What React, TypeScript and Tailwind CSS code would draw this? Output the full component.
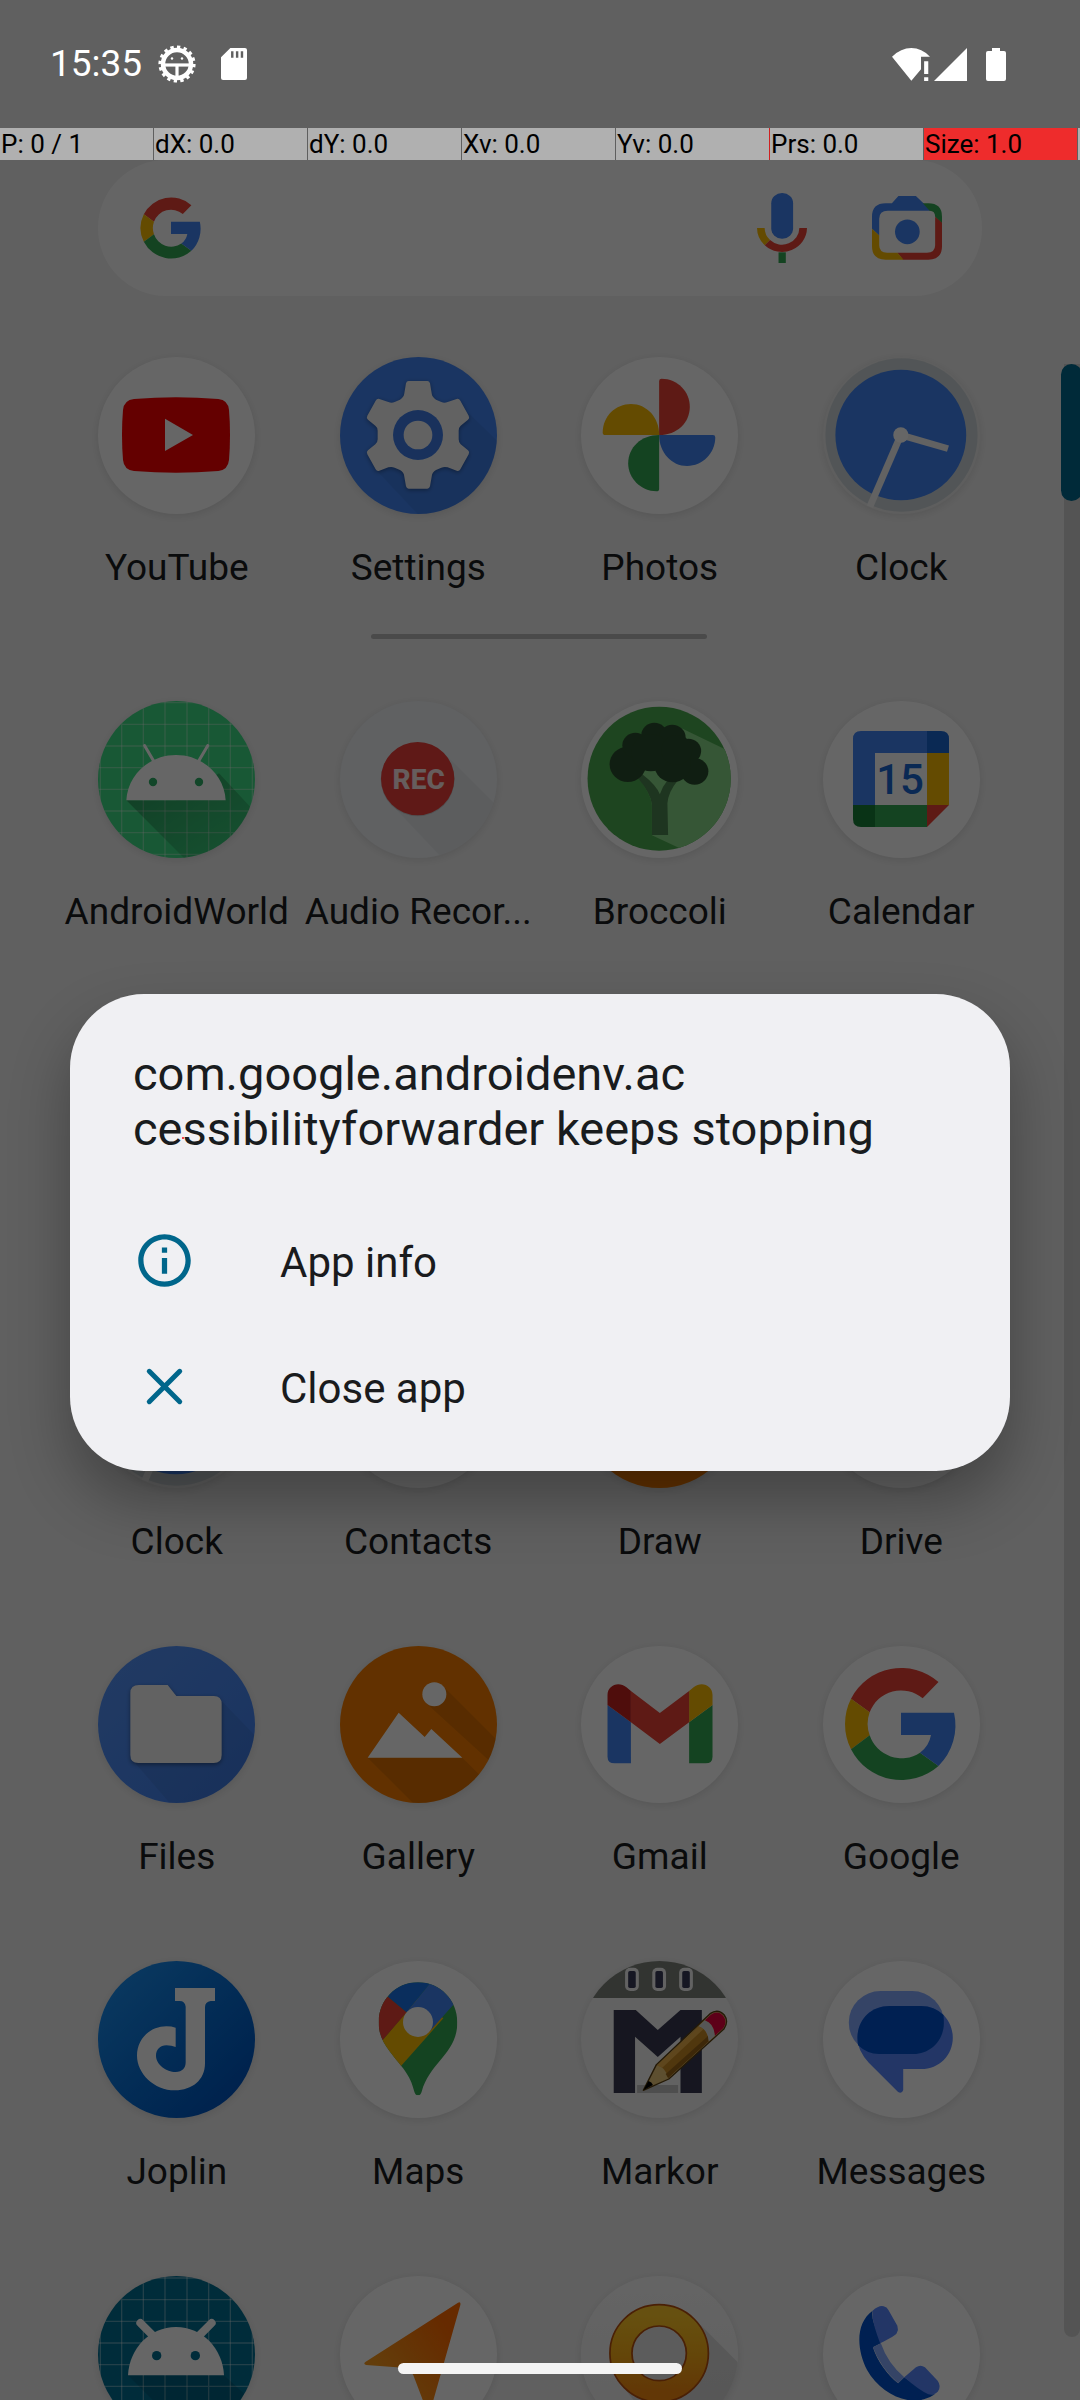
import type { ReactNode } from "react";

type IconProps = { viewBox: string; children: ReactNode };

function Art({ viewBox, children }: IconProps) {
  return (
    <svg viewBox={viewBox} preserveAspectRatio="none" className="block size-full" aria-hidden="true">
      {children}
    </svg>
  );
}

function GoogleG() {
  return (
    <>
      <path fill="#ea4335" d="M-50-25.3A56.5 56.5 0 0 1 37.5-42L21.7-25.7A33.5 33.5 0 0 0-31.3-11.7Z" />
      <path fill="#fbbc04" d="M-50-25.3L-31.3-11.7A33.5 33.5 0 0 0-31.3 11.3L-50 25.3A56.5 56.5 0 0 1-50-25.3Z" />
      <path fill="#34a853" d="M-50 25.3A56.5 56.5 0 0 0 37.5 42L19 28.7A33.5 33.5 0 0 1-31.3 11.3Z" />
      <path fill="#4285f4" d="M0-11.3H53A57 57 0 0 1 37.5 42L19 28.7A28 28 0 0 0 30 11H0Z" />
    </>
  );
}

function YouTubeIcon() {
  return (
    <Art viewBox="117 81 471 471">
      <path
        fill="#fa0000"
        d="M225 207Q351 196 478 207Q507 210 510 240Q516 315 510 390Q507 420 478 423Q351 434 225 423Q195 420 192 390Q186 315 192 240Q195 210 225 207Z"
      />
      <path fill="#fff" d="M318 266L402 315L318 363Z" />
    </Art>
  );
}

function SettingsIcon() {
  return (
    <Art viewBox="840 81 471 471">
      <path fill="#000" opacity="0.05" d="M1226 250L1330 350V560H1080L951 423L1074 315Z" />
      <g style={{ filter: "drop-shadow(0 4px 6px rgba(0,0,0,.35))" }}>
        <path
          fill="#f6f6f6"
          d="M1046 153H1102Q1108 153 1110 160L1115 190Q1116 202 1128 209L1144 216Q1153 220 1163 216L1190 207Q1197 205 1201 212L1226 257Q1230 264 1224 269L1202 287Q1196 292 1196 302V328Q1196 338 1202 343L1224 361Q1230 366 1226 373L1201 418Q1197 425 1190 422L1163 412Q1153 409 1144 413L1128 420Q1116 427 1115 440L1110 469Q1108 476 1102 476H1046Q1040 476 1038 469L1033 440Q1032 427 1020 420L1004 413Q995 409 985 412L958 422Q951 425 947 418L922 373Q918 366 924 361L946 343Q953 338 953 328V302Q953 292 946 287L924 269Q918 264 922 257L947 212Q951 205 958 207L985 216Q995 220 1004 216L1020 209Q1032 202 1033 190L1038 160Q1040 153 1046 153Z"
        />
      </g>
      <circle cx="1074" cy="315" r="75" fill="#3f7ce6" />
      <circle cx="1074" cy="315" r="43" fill="#f6f6f6" />
    </Art>
  );
}

function PhotosIcon() {
  return (
    <Art viewBox="119 81 456 471">
      <path fill="#ea4335" d="M346 315V153Q346 146 353 146C400 146 435 185 435 230C435 278 398 315 346 315Z" />
      <path fill="#fbbc04" d="M346 315H190Q182 315 182 308C182 258 220 222 264 222C310 222 346 262 346 315Z" />
      <path fill="#4285f4" d="M346 315H502Q509 315 509 322C509 370 472 408 427 408C382 408 346 368 346 315Z" />
      <path fill="#34a853" d="M346 315V476Q346 484 338 484C293 484 256 445 256 400C256 352 294 315 346 315Z" />
    </Art>
  );
}

function ClockIcon() {
  return (
    <Art viewBox="822 81 456 471">
      <ellipse cx="1050" cy="315" rx="221" ry="230" fill="#cdd5d9" />
      <ellipse cx="1048" cy="315" rx="190" ry="196" fill="#4285f4" />
      <path d="M1048 315L958 530" stroke="#f4f4f4" strokeWidth="20" />
      <path d="M1048 315L1185 356" stroke="#f4f4f4" strokeWidth="20" />
      <ellipse cx="1048" cy="315" rx="22" ry="23" fill="#fff" />
    </Art>
  );
}

const gridXs = [124, 188, 253, 318, 384, 449, 514, 580];

function AndroidWorldIcon() {
  return (
    <Art viewBox="117 93 471 471">
      <defs>
        <linearGradient id="aw-shadow" x1="0" y1="0" x2="1" y2="1">
          <stop offset="0" stopOpacity="0.3" />
          <stop offset="1" stopOpacity="0.05" />
        </linearGradient>
      </defs>
      {gridXs.map((x, i) => (
        <path key={x} d={`M${x} 93V564M117 ${98 + i * 65}H588`} stroke="#fff" strokeOpacity="0.32" strokeWidth="4" />
      ))}
      <path fill="url(#aw-shadow)" d="M202 391L380 569H620V460L480 310L351 391Z" />
      <path fill="#fff" d="M202 391C206 314 272 255 351 255C430 255 496 314 500 391Z" />
      <path d="M257 227L288 280M446 227L415 280" stroke="#fff" strokeWidth="9" strokeLinecap="round" />
      <circle cx="282" cy="336" r="12.5" fill="#2fae67" />
      <circle cx="420" cy="336" r="12.5" fill="#2fae67" />
    </Art>
  );
}

function RecorderIcon() {
  return (
    <Art viewBox="840 93 471 471">
      <path fill="#000" opacity="0.035" d="M1151 248L1330 427V600H1180L995 404Z" />
      <circle cx="1073" cy="328" r="111" fill="#000" opacity="0.12" />
      <circle cx="1073" cy="326" r="110" fill="#ee403a" />
      <text
        x="1076"
        y="357"
        textAnchor="middle"
        fontFamily="Roboto, sans-serif"
        fontWeight="800"
        fontSize="84"
        fill="#ffe8e8"
      >
        REC
      </text>
    </Art>
  );
}

function BroccoliIcon() {
  return (
    <Art viewBox="122 93 456 471">
      <defs>
        <clipPath id="broccoli-clip">
          <ellipse cx="349" cy="326" rx="208" ry="216" />
        </clipPath>
      </defs>
      <g clipPath="url(#broccoli-clip)">
        <path fill="#4dac50" d="M122 93H578V564H122Z" />
        <path fill="#87d787" d="M414 175L545 240H580V564H470L328 496L300 310Z" />
        <path
          fill="#4d8550"
          d="M328 495V405Q325 370 285 325L300 313Q340 345 351 373Q358 350 372 333H402Q376 365 373 400L375 495Z"
        />
        <path fill="#4dac50" d="M200 300L288 325Q325 370 328 405V496H200Z" />
        <g fill="#2a4d2d">
          <circle cx="258" cy="283" r="53" />
          <circle cx="280" cy="226" r="38" />
          <circle cx="335" cy="196" r="38" />
          <circle cx="387" cy="203" r="39" />
          <circle cx="434" cy="243" r="37" />
          <circle cx="452" cy="304" r="40" />
          <circle cx="388" cy="284" r="53" />
          <circle cx="325" cy="248" r="56" />
          <circle cx="400" cy="240" r="45" />
        </g>
      </g>
    </Art>
  );
}

function CalendarIcon() {
  return (
    <Art viewBox="0 0 157 157">
      <path fill="#4285f4" d="M30 104V38Q30 30 38 30H104V52H52V104Z" />
      <path fill="#1967d2" d="M104 30H118Q126 30 126 38V52H104Z" />
      <path fill="#fbbc04" d="M104 52H126V104H104Z" />
      <path fill="#188038" d="M30 104H52V126H38Q30 126 30 118Z" />
      <path fill="#34a853" d="M52 104H104V126H52Z" />
      <path fill="#ea4335" d="M104 104H126L104 126Z" />
      <text
        x="77"
        y="93"
        textAnchor="middle"
        fontFamily="Roboto, sans-serif"
        fontWeight="500"
        fontSize="42"
        fill="#1967d2"
      >
        15
      </text>
    </Art>
  );
}

function FilesIcon() {
  return (
    <Art viewBox="117 78 471 471">
      <path fill="#000" opacity="0.06" d="M485 240L620 380V570H350L225 425Z" />
      <path
        fill="#f6f6f6"
        style={{ filter: "drop-shadow(0 5px 6px rgba(0,0,0,.4))" }}
        d="M240 195H326L352 228H464Q488 228 488 252V405Q488 429 464 429H238Q214 429 214 405V219Q214 195 240 195Z"
      />
    </Art>
  );
}

function GalleryIcon() {
  return (
    <Art viewBox="840 78 471 471">
      <g fill="#000" opacity="0.1">
        <path d="M1149 198L1340 389V470L1098 249Z" />
        <path d="M923 413H1207L1340 546V570H1080Z" />
      </g>
      <circle cx="1123" cy="223" r="36" fill="#fff" />
      <path fill="#fff" d="M923 413L1016 278L1094 351L1114 327L1207 413Z" />
    </Art>
  );
}

function GmailIcon() {
  return (
    <Art viewBox="122 78 456 471">
      <path fill="#4285f4" d="M199 255L267 307V430H220Q199 430 199 410Z" />
      <path fill="#34a853" d="M504 255L436 307V430H484Q504 430 504 410Z" />
      <path fill="#c5221f" d="M199 255V225C199 195 232 182 254 202L267 213V307Z" />
      <path fill="#fbbc04" d="M504 255V225C504 195 471 182 449 202L436 213V307Z" />
      <path fill="#ea4335" d="M267 213L351 279L436 213V307L351 372L267 307Z" />
    </Art>
  );
}

function JoplinIcon() {
  return (
    <Art viewBox="117 93 471 471">
      <path
        fill="#fff"
        d="M348 174H468V213H455Q438 215 438 232V400C438 450 400 481 348 481C285 481 234 430 234 377C234 325 275 289 322 289Q338 289 350 293V351Q338 346 322 346C303 346 291 360 291 377C291 403 322 426 350 426C370 426 380 414 380 397V230Q378 213 362 213H348Z"
      />
    </Art>
  );
}

function MapsIcon() {
  return (
    <Art viewBox="840 93 471 471">
      <defs>
        <clipPath id="pin-clip">
          <path d="M1074 157C1140 157 1192 210 1192 277C1192 370 1110 395 1085 485Q1082 496 1074 496Q1066 496 1063 485C1050 430 1025 412 990 365C968 336 956 312 956 277C956 210 1008 157 1074 157Z" />
        </clipPath>
      </defs>
      <g clipPath="url(#pin-clip)">
        <path fill="#34a853" d="M940 140H1210V500H940Z" />
        <path fill="#fbbc04" d="M968 330L1074 205L1150 265L1023 408L900 400Z" />
        <path fill="#ea4335" d="M985 201L1040 247L968 330L900 340V201Z" />
        <path fill="#1a73e8" d="M985 201L1040 247L1108 163V140H985Z" />
        <path fill="#4285f4" d="M1040 247L1108 163V140H1200V201L1180 224L1110 303L1074 277Z" />
      </g>
      <circle cx="1074" cy="276" r="45" fill="#fff" />
    </Art>
  );
}

function MarkorIcon() {
  return (
    <Art viewBox="122 93 456 471">
      <path fill="#7d827b" d="M122 93H578V204H122Z" />
      {[250, 329, 407].map((x) => (
        <g key={x}>
          <rect x={x} y="113" width="40" height="70" rx="15" fill="#f4f4f4" />
          <rect x={x + 9} y="123" width="22" height="51" rx="5" fill="#383a58" />
        </g>
      ))}
      <path fill="#373950" d="M217 240H281L345 300L411 240H473V489H411V320L345 381L279 320V489H217Z" />
      <path fill="#c2c2c2" d="M285 465H404V489H285Z" />
      <path
        fill="#e8c578"
        stroke="#5a3f10"
        strokeWidth="4"
        strokeLinejoin="round"
        d="M303 481L341 404L497 251Q520 235 538 255Q552 275 537 297L377 447Z"
      />
      <path fill="#c98a24" d="M343 406L464 289Q492 300 493 334L375 444Q368 412 343 406Z" />
      <path fill="#eab04a" d="M343 406L464 289L478 297L358 413Z" />
      <path fill="#9a6518" d="M368 432L492 317L493 334L375 444Z" />
      <path fill="#d8d8d8" d="M464 289L482 271Q508 280 511 317L493 334Q492 300 464 289Z" />
      <path fill="#e8003c" d="M482 271L499 254Q520 240 535 257Q548 275 535 295L511 317Q508 280 482 271Z" />
      <path fill="#000" d="M303 481L318 453Q328 456 331 465Z" />
    </Art>
  );
}

function MessagesIcon() {
  return (
    <Art viewBox="822 93 456 471">
      <rect x="897" y="183" width="276" height="189" rx="92" ry="94" fill="#85aaff" />
      <path
        fill="#5888ff"
        d="M1015 228H1107C1160 228 1199 270 1199 323C1199 375 1160 417 1107 417H1055V480Q1051 493 1040 486L955 398Q922 362 922 325C922 270 960 228 1015 228Z"
      />
      <path
        fill="#0052cc"
        d="M1015 228H1107Q1145 228 1172 255Q1173 265 1173 280C1173 330 1135 372 1085 372H985Q950 372 924 346Q922 335 922 323C922 270 960 228 1015 228Z"
      />
    </Art>
  );
}

function AndroidTealIcon() {
  return (
    <Art viewBox="117 1038 471 471">
      {gridXs.map((x, i) => (
        <path key={x} d={`M${x} 1038V1509M117 ${1044 + i * 65}H588`} stroke="#fff" strokeOpacity="0.35" strokeWidth="4" />
      ))}
      <path fill="#000" opacity="0.12" d="M207 1336L380 1509H620V1450L495 1336Z" />
      <path fill="#fff" d="M207 1336C211 1255 272 1191 351 1191C430 1191 491 1255 495 1336Z" />
      <path d="M244 1179L287 1222M458 1179L415 1222" stroke="#fff" strokeWidth="24" strokeLinecap="round" />
      <circle cx="293" cy="1277" r="14" fill="#006e91" />
      <circle cx="409" cy="1277" r="14" fill="#006e91" />
    </Art>
  );
}

function NavigationIcon() {
  return (
    <Art viewBox="840 1038 471 471">
      <defs>
        <linearGradient id="arrow-fill" x1="1" y1="0.1" x2="0.2" y2="0.7">
          <stop offset="0.2" stopColor="#ff6a00" />
          <stop offset="1" stopColor="#f89a1c" />
        </linearGradient>
      </defs>
      <path
        fill="url(#arrow-fill)"
        d="M1194 1118Q1203 1113 1201 1125L1116 1425Q1104 1450 1094 1425L1060 1336Q1053 1316 1030 1313L918 1305Q909 1301 916 1296Z"
      />
    </Art>
  );
}

function RingIcon() {
  return (
    <Art viewBox="122 1038 456 471">
      <defs>
        <linearGradient id="ring-fill" x1="0" y1="0" x2="0" y2="1">
          <stop offset="0" stopColor="#ffc828" />
          <stop offset="0.5" stopColor="#fbb018" />
          <stop offset="1" stopColor="#f58a10" />
        </linearGradient>
      </defs>
      <path fill="#000" opacity="0.1" d="M450 1165L600 1320V1520H360L245 1372Z" />
      <ellipse cx="349" cy="1270" rx="79" ry="83" fill="#e6e6e6" />
      <ellipse cx="349" cy="1270" rx="111" ry="114" fill="none" stroke="#b8500e" strokeWidth="69" />
      <ellipse cx="349" cy="1270" rx="111" ry="114" fill="none" stroke="url(#ring-fill)" strokeWidth="59" />
    </Art>
  );
}

function PhoneIcon() {
  return (
    <Art viewBox="822 1038 456 471">
      <path
        fill="#0052cc"
        d="M966 1142C915 1180 920 1260 950 1320C985 1385 1060 1425 1115 1408Q1135 1402 1148 1392Q1130 1395 1115 1382L1058 1342L1040 1360C1010 1335 980 1295 967 1252L990 1240L970 1180Q963 1160 966 1142Z"
      />
      <path
        fill="#5888ff"
        d="M966 1142Q985 1125 998 1129Q1008 1131 1012 1140L1038 1187Q1042 1198 1036 1210Q1033 1217 988 1240Q968 1185 966 1160Z"
      />
      <path
        fill="#5888ff"
        d="M1058 1342L1092 1312Q1105 1303 1118 1312L1155 1352Q1166 1368 1156 1384Q1145 1398 1128 1393Q1100 1380 1058 1342Z"
      />
      <path fill="#85aaff" d="M967 1252L990 1240Q1010 1300 1058 1342L1040 1360Q990 1315 967 1252Z" />
    </Art>
  );
}

type App = { name: string; tile: string; icon?: ReactNode; label?: boolean };

const favourites: App[] = [
  { name: "YouTube", tile: "bg-white", icon: <YouTubeIcon /> },
  { name: "Settings", tile: "bg-[#4285f4]", icon: <SettingsIcon /> },
  { name: "Photos", tile: "bg-white", icon: <PhotosIcon /> },
  { name: "Clock", tile: "bg-[#ebebeb]", icon: <ClockIcon /> },
];

const upperApps: App[] = [
  { name: "AndroidWorld", tile: "bg-[#3ddc84]", icon: <AndroidWorldIcon /> },
  { name: "Audio Recor...", tile: "bg-[#eff2f5]", icon: <RecorderIcon /> },
  { name: "Broccoli", tile: "bg-white", icon: <BroccoliIcon /> },
  { name: "Calendar", tile: "bg-white", icon: <CalendarIcon /> },
];

const lowerApps: App[] = [
  { name: "Clock", tile: "bg-[#ebebeb]", icon: <ClockIcon /> },
  { name: "Contacts", tile: "bg-white" },
  { name: "Draw", tile: "bg-[#f57c00]" },
  { name: "Drive", tile: "bg-white" },
  { name: "Files", tile: "bg-linear-to-br from-[#5694f8] to-[#4080f0]", icon: <FilesIcon /> },
  { name: "Gallery", tile: "bg-[#f57c00]", icon: <GalleryIcon /> },
  { name: "Gmail", tile: "bg-white", icon: <GmailIcon /> },
  {
    name: "Google",
    tile: "bg-white",
    icon: (
      <Art viewBox="-78 -78 157 157">
        <GoogleG />
      </Art>
    ),
  },
  { name: "Joplin", tile: "bg-linear-to-br from-[#1e95f5] to-[#004ab8]", icon: <JoplinIcon /> },
  { name: "Maps", tile: "bg-white", icon: <MapsIcon /> },
  { name: "Markor", tile: "bg-[#f4f4f4]", icon: <MarkorIcon /> },
  { name: "Messages", tile: "bg-white", icon: <MessagesIcon /> },
  { name: "Android", tile: "bg-[#006e91]", icon: <AndroidTealIcon />, label: false },
  { name: "Navigation", tile: "bg-white", icon: <NavigationIcon />, label: false },
  { name: "Ring", tile: "bg-linear-to-b from-[#fafafa] to-[#f0f0f0]", icon: <RingIcon />, label: false },
  { name: "Phone", tile: "bg-white", icon: <PhoneIcon />, label: false },
];

function AppTile({ app }: { app: App }) {
  return (
    <li className="min-w-0">
      <button type="button" aria-label={app.name} className="flex w-full flex-col items-center gap-8">
        <span className={`size-[157px] shrink-0 overflow-hidden rounded-full shadow-[0_2px_8px_rgba(0,0,0,0.1)] ${app.tile}`}>
          {app.icon}
        </span>
        {app.label !== false && (
          <span className="text-[37px] leading-[43px] whitespace-nowrap text-[#1a1c1e]">{app.name}</span>
        )}
      </button>
    </li>
  );
}

function AppGrid({ apps }: { apps: App[] }) {
  return (
    <ul className="grid grid-cols-4 gap-y-[83px]">
      {apps.map((app, i) => (
        <AppTile key={i} app={app} />
      ))}
    </ul>
  );
}

function SearchBar() {
  return (
    <div className="mx-[98px] flex h-[136px] items-center rounded-full bg-[#fdfdfd] pr-10 pl-[42px]">
      <svg viewBox="-57 -57 114 114" className="size-[62px] shrink-0" aria-hidden="true">
        <GoogleG />
      </svg>
      <input type="text" aria-label="Search" className="min-w-0 flex-1 bg-transparent px-4 text-4xl outline-none" />
      <button type="button" aria-label="Voice search" className="h-[70px] w-[50px] shrink-0">
        <Art viewBox="630 579 144 210">
          <rect x="671" y="579" width="63" height="137" rx="31" fill="#4285f4" />
          <path d="M641 684A61 62 0 0 0 660 728" fill="none" stroke="#fbbc04" strokeWidth="22" />
          <path d="M660 728A61 62 0 0 0 763 684" fill="none" stroke="#ea4335" strokeWidth="22" />
          <path fill="#34a853" d="M692 757H713V789H692Z" />
        </Art>
      </button>
      <button type="button" aria-label="Search with camera" className="ml-[65px] h-16 w-[70px] shrink-0">
        <Art viewBox="966 588 204 191">
          <path
            fill="#4285f4"
            d="M966 686V650Q966 610 1006 610H1024L1043 588H1094L1116 610L1136 632H1012Q987 632 987 656V706Z"
          />
          <path fill="#34a853" d="M1114 610H1130Q1170 610 1170 650V670L1150 650Q1150 632 1134 632Z" />
          <path
            fill="#ea4335"
            d="M1150 650L1170 668V738Q1170 778 1130 778H1056L1040 757H1126Q1150 757 1150 735Z"
          />
          <path fill="#fbbc04" d="M966 686L987 706V735Q987 757 1010 757H1040L1058 778H1006Q966 778 966 738Z" />
          <ellipse cx="1069" cy="695" rx="36" ry="37" fill="#4285f4" />
        </Art>
      </button>
    </div>
  );
}

function StatusBar() {
  return (
    <header className="relative z-20 flex h-32 items-center pr-[74px] pl-[50px] text-white">
      <time className="text-[37px] leading-[44px]">15:35</time>
      <svg viewBox="0 0 38 38" className="ml-4 size-[38px]" fill="none" stroke="currentColor" aria-hidden="true">
        <circle cx="19" cy="19" r="14" strokeWidth="4.5" />
        <circle cx="19" cy="19" r="16.8" strokeWidth="3.6" pathLength="32" strokeDasharray="1 1" />
        <path d="M5 20H33" strokeWidth="3.2" />
        <path d="M19 20V33" strokeWidth="3.2" />
        <circle cx="14" cy="13.5" r="1.2" fill="currentColor" stroke="none" />
        <circle cx="24" cy="13.5" r="1.2" fill="currentColor" stroke="none" />
      </svg>
      <svg viewBox="645 147 75 96" preserveAspectRatio="none" className="ml-[25px] h-8 w-[26px]" aria-hidden="true">
        <path
          fill="#fff"
          fillRule="evenodd"
          d="M672 147H714Q720 147 720 153V237Q720 243 714 243H651Q645 243 645 237V175ZM674 157V176H681V157ZM688 157V176H695V157ZM702 157V176H709V157Z"
        />
      </svg>
      <span className="flex-1" />
      <svg viewBox="1022 141 110 99" preserveAspectRatio="none" className="h-[33px] w-[38px]" fill="#fff" aria-hidden="true">
        <path d="M1022 167Q1048 141 1078 141Q1108 141 1132 167H1106V205L1078 239Z" />
        <path d="M1115 181H1127V219H1115ZM1115 229H1127V240H1115Z" />
      </svg>
      <svg viewBox="0 0 33 33" className="ml-1 size-[33px]" fill="#fff" aria-hidden="true">
        <path d="M33 0V33H0Z" />
      </svg>
      <svg viewBox="0 0 20 33" className="ml-[19px] h-[33px] w-5" fill="#fff" aria-hidden="true">
        <path d="M6 0H14V3H18Q20 3 20 5V31Q20 33 18 33H2Q0 33 0 31V5Q0 3 2 3H6Z" />
      </svg>
    </header>
  );
}

const readings = ["P: 0 / 1", "dX: 0.0", "dY: 0.0", "Xv: 0.0", "Yv: 0.0", "Prs: 0.0", "Size: 1.0"];

function PointerReadout() {
  return (
    <div className="relative z-20 flex h-8 text-[26px] leading-8 text-black">
      {readings.map((text, i) => (
        <span
          key={text}
          className={`min-w-0 flex-1 border-r pl-px whitespace-nowrap ${i === 6 ? "bg-[#ee2c2c]" : "bg-[#b0b0b0]"} ${
            i === 4 ? "border-[#d02020]" : "border-[#5f5f5f]"
          }`}
        >
          {text}
        </span>
      ))}
      <span className="w-[2px] bg-[#b0b0b0]" />
    </div>
  );
}

function CrashDialog() {
  return (
    <div className="absolute inset-0 z-10 flex items-center bg-black/60 px-[70px] pt-32 pb-[63px]">
      <section
        role="alertdialog"
        aria-labelledby="crash-title"
        className="relative w-full rounded-[74px] bg-[#f0f0f3] pt-[52px] pb-[22px] shadow-[0_30px_60px_rgba(0,0,0,0.3)]"
      >
        <h1 id="crash-title" className="px-[63px] text-[47px] leading-[55px] text-[#191c1e]">
          com.google.androidenv.ac
          <br />
          cessibilityforwarder keeps stopping
        </h1>
        <span className="absolute top-[143px] left-[112px] h-[2px] w-[2px] bg-[#f04050]" />
        <div className="mt-[41px] flex flex-col text-[42px] leading-[50px] text-[#1a1b1d]">
          <button type="button" className="flex h-[126px] items-center gap-[84px] px-[63px] text-left">
            <svg viewBox="0 0 24 24" className="size-[63px]" fill="#00668b" aria-hidden="true">
              <path d="M11 7h2v2h-2zm0 4h2v6h-2zm1-9C6.48 2 2 6.48 2 12s4.48 10 10 10 10-4.48 10-10S17.52 2 12 2zm0 18c-4.41 0-8-3.59-8-8s3.59-8 8-8 8 3.59 8 8-3.59 8-8 8z" />
            </svg>
            <span className="pt-1.5">App info</span>
          </button>
          <button type="button" className="flex h-[126px] items-center gap-[84px] px-[63px] text-left">
            <svg
              viewBox="0 0 24 24"
              className="size-[63px]"
              fill="none"
              stroke="#00668b"
              strokeWidth="1.9"
              strokeLinecap="round"
              aria-hidden="true"
            >
              <path d="M6.2 6.2L17.8 17.8M17.8 6.2L6.2 17.8" />
            </svg>
            <span className="pt-1.5">Close app</span>
          </button>
        </div>
      </section>
    </div>
  );
}

export default function App() {
  return (
    <div className="relative h-screen overflow-hidden bg-[#f0f0f0] font-[Roboto,sans-serif]">
      <StatusBar />
      <PointerReadout />
      <main>
        <SearchBar />
        <div className="mt-[61px] mr-[58px] ml-14">
          <AppGrid apps={favourites} />
          <hr className="mx-auto mt-[45px] mb-[62px] h-[5px] w-[336px] rounded-full border-0 bg-[#b9b9b9]" />
          <AppGrid apps={upperApps} />
          <div className="mt-[398px]">
            <AppGrid apps={lowerApps} />
          </div>
        </div>
      </main>
      <div className="absolute top-[364px] right-0 bottom-[63px] w-4 rounded-b-full bg-[#d2d2d2]">
        <div className="absolute top-0 -right-[2px] h-[137px] w-[21px] rounded-full bg-[#006a8e]" />
      </div>
      <CrashDialog />
      <div className="absolute inset-x-0 bottom-[26px] z-20 mx-auto h-[11px] w-[284px] rounded-full bg-[#f4f4f4]" />
    </div>
  );
}
